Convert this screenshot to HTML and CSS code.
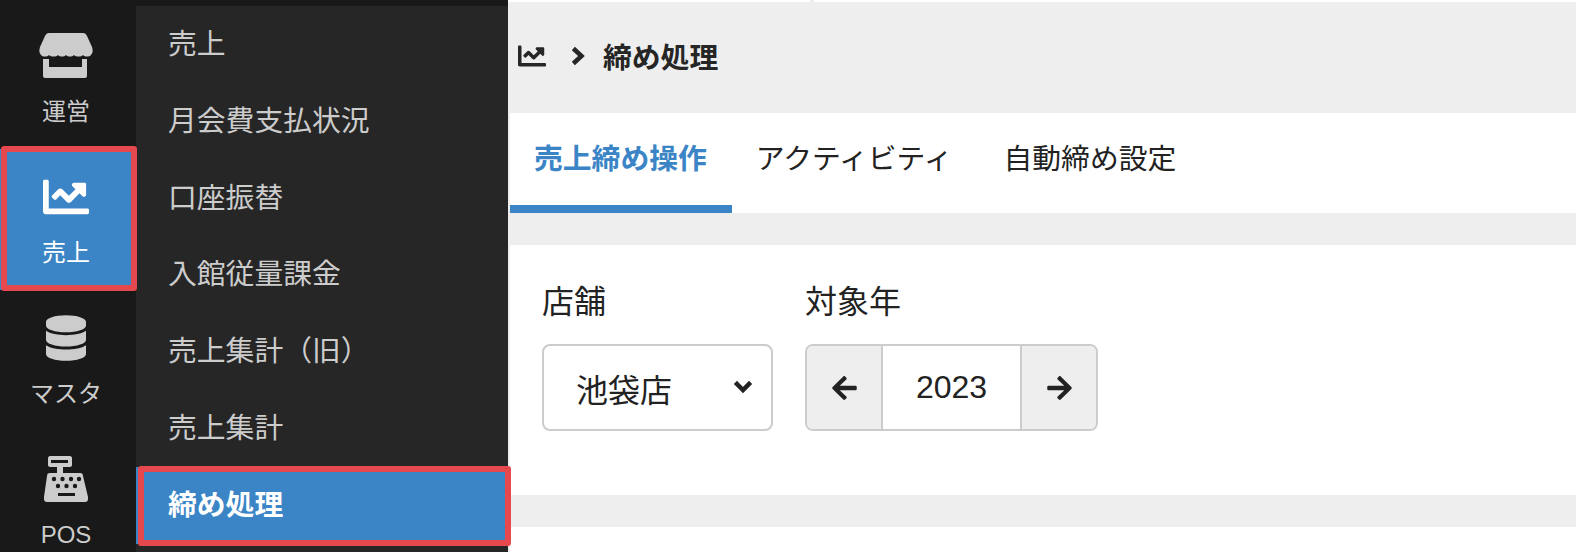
FILE: index.html
```html
<!DOCTYPE html>
<html lang="ja">
<head>
    <meta charset="UTF-8">
    <meta name="viewport" content="width=device-width, initial-scale=1.0">
    <title>締め処理</title>
    <link rel="stylesheet" href="styles.css">
</head>
<body>
    <nav class="rail">
        <a class="rail-item">
            <svg class="rail-icon" width="54" height="46" viewBox="0 0 54 46">
                <path d="M9 0h35c2 0 3 1 4 3l5 11c1 3 1 6-1 8-2 2-6 2-8 0-2 2-7 2-9 0-2 2-6 2-8 0-2 2-6 2-8 0-2 2-7 2-9 0-2 2-6 2-8 0-2-2-2-5-1-8l5-11c1-2 2-3 4-3z"/>
                <path d="M4 26h6v8h33v-8h5v17c0 1-1 2-2 2H6c-1 0-2-1-2-2z"/>
            </svg>
            <span>運営</span>
        </a>
        <a class="rail-item rail-active">
            <svg class="rail-icon" width="46" height="46" viewBox="0 0 512 512"><path d="M496 384H64V80c0-8.84-7.16-16-16-16H16C7.16 64 0 71.16 0 80v336c0 17.67 14.33 32 32 32h464c8.84 0 16-7.16 16-16v-32c0-8.84-7.16-16-16-16zM464 96H345.94c-21.38 0-32.09 25.85-16.97 40.97l32.4 32.4L288 242.75l-73.37-73.37c-12.5-12.5-32.76-12.5-45.25 0l-68.69 68.69c-6.25 6.25-6.25 16.38 0 22.63l22.62 22.62c6.25 6.25 16.38 6.25 22.63 0L192 237.25l73.37 73.37c12.5 12.5 32.76 12.5 45.25 0l96-96 32.4 32.4c15.12 15.12 40.97 4.41 40.97-16.97V112c.01-8.84-7.15-16-16-16z"/></svg>
            <span>売上</span>
            <i class="mark"></i>
        </a>
        <a class="rail-item">
            <svg class="rail-icon" width="40" height="46" viewBox="0 0 448 512"><path d="M448 73.143v45.714C448 159.143 347.667 192 224 192S0 159.143 0 118.857V73.143C0 32.857 100.333 0 224 0s224 32.857 224 73.143zM448 176v102.857C448 319.143 347.667 352 224 352S0 319.143 0 278.857V176c48.125 33.143 136.208 48.572 224 48.572S399.874 209.143 448 176zm0 160v102.857C448 479.143 347.667 512 224 512S0 479.143 0 438.857V336c48.125 33.143 136.208 48.572 224 48.572S399.874 369.143 448 336z"/></svg>
            <span>マスタ</span>
        </a>
        <a class="rail-item">
            <svg class="rail-icon" width="44" height="46" viewBox="0 0 44 46">
                <path fill-rule="evenodd" d="M6 0h20c1 0 2 1 2 2v7c0 1-1 2-2 2h-7v6h17c2 0 3 1 3 3l5 21v2c0 2-1 3-3 3H3c-2 0-3-1-3-3v-2l3-21c0-2 1-3 3-3h7v-6H6c-1 0-2-1-2-2V2c0-1 1-2 2-2zm1 4v3h17V4zm7 33v3h17v-3z"/>
                <g class="pos-keys">
                    <circle cx="10" cy="23" r="2.2"/><circle cx="18.500" cy="23" r="2.2"/><circle cx="27" cy="23" r="2.2"/><circle cx="35" cy="23" r="2.2"/>
                    <circle cx="14" cy="30" r="2.2"/><circle cx="22.500" cy="30" r="2.2"/><circle cx="31" cy="30" r="2.2"/>
                </g>
            </svg>
            <span>POS</span>
        </a>
    </nav>

    <aside class="side">
        <div class="side-list">
            <a class="side-item">売上</a>
            <a class="side-item">月会費支払状況</a>
            <a class="side-item">口座振替</a>
            <a class="side-item">入館従量課金</a>
            <a class="side-item">売上集計（旧）</a>
            <a class="side-item">売上集計</a>
            <a class="side-item side-active">締め処理<i class="mark"></i></a>
        </div>
    </aside>

    <main class="main">
        <div class="top-strip">
            <div class="strip-left"></div>
            <div class="strip-right"></div>
        </div>
        <div class="breadcrumb">
            <svg width="28" height="28" viewBox="0 0 512 512"><path d="M496 384H64V80c0-8.84-7.16-16-16-16H16C7.16 64 0 71.16 0 80v336c0 17.67 14.33 32 32 32h464c8.84 0 16-7.16 16-16v-32c0-8.84-7.16-16-16-16zM464 96H345.94c-21.38 0-32.09 25.85-16.97 40.97l32.4 32.4L288 242.75l-73.37-73.37c-12.5-12.5-32.76-12.5-45.25 0l-68.69 68.69c-6.25 6.25-6.25 16.38 0 22.63l22.62 22.62c6.25 6.25 16.38 6.25 22.63 0L192 237.25l73.37 73.37c12.5 12.5 32.76 12.5 45.25 0l96-96 32.4 32.4c15.12 15.12 40.97 4.41 40.97-16.97V112c.01-8.84-7.15-16-16-16z"/></svg>
            <svg class="crumb-sep chev" width="15" height="22" viewBox="0 0 15 22"><polyline points="4,5 10.500,11 4,17"/></svg>
            <span>締め処理</span>
        </div>

        <div class="tabs">
            <a class="tab tab-active">売上締め操作</a>
            <a class="tab">アクティビティ</a>
            <a class="tab">自動締め設定</a>
        </div>

        <section class="panel">
            <div class="field">
                <label>店舗</label>
                <div class="select">
                    <span>池袋店</span>
                    <svg class="chev" width="20" height="16" viewBox="0 0 20 16"><polyline points="4,4 10,10 16,4"/></svg>
                </div>
            </div>
            <div class="field">
                <label>対象年</label>
                <div class="stepper">
                    <button class="step">
                        <svg width="25" height="28" viewBox="0 0 448 512"><path d="M257.5 445.1l-22.2 22.2c-9.4 9.4-24.6 9.4-33.9 0L7 273c-9.4-9.4-9.4-24.6 0-33.9L201.4 44.7c9.4-9.4 24.6-9.4 33.9 0l22.2 22.2c9.5 9.5 9.3 25-.4 34.3L136.6 216H424c13.3 0 24 10.7 24 24v32c0 13.3-10.7 24-24 24H136.6l120.5 114.8c9.8 9.3 10 24.8.4 34.3z"/></svg>
                    </button>
                    <div class="year">2023</div>
                    <button class="step">
                        <svg width="25" height="28" viewBox="0 0 448 512"><path d="M190.5 66.9l22.2-22.2c9.4-9.4 24.6-9.4 33.9 0L441 239c9.4 9.4 9.4 24.6 0 33.9L246.6 467.3c-9.4 9.4-24.6 9.4-33.9 0l-22.2-22.2c-9.5-9.5-9.3-25 .4-34.3L311.4 296H24c-13.3 0-24-10.7-24-24v-32c0-13.3 10.7-24 24-24h287.4L190.9 101.2c-9.8-9.3-10-24.8-.4-34.3z"/></svg>
                    </button>
                </div>
            </div>
        </section>

        <section class="panel-next"></section>
    </main>
</body>
</html>
```

FILE: styles.css
```css
html, body {
    height: 100%;
}

body {
    margin: 0;
    display: flex;
    overflow: hidden;
    font-family: "Liberation Sans", "Noto Sans CJK JP", sans-serif;
    background-color: #eeeeee;
    color: #222;
}

svg {
    display: block;
    fill: currentColor;
}

.chev {
    fill: none;
    stroke: currentColor;
    stroke-width: 4.5;
    stroke-linecap: square;
}

.pos-keys {
    fill: #191919;
}

.rail {
    width: 136px;
    flex-shrink: 0;
    padding-top: 8px;
    background-color: #191919;
    color: #cccccc;
}

.rail-item {
    position: relative;
    height: 141px;
    display: flex;
    flex-direction: column;
    align-items: center;
    padding: 25px 4px 0 0;
    box-sizing: border-box;
    font-size: 24px;
    line-height: 32px;
}

.rail-icon {
    height: 46px;
    margin-bottom: 17px;
}

.rail-active {
    background-color: #3b85c6;
    color: white;
}

.mark {
    position: absolute;
    top: -3px;
    right: -1px;
    bottom: -1px;
    left: 1px;
    border: 6px solid #e5484d;
    border-radius: 3px;
}

.side {
    width: 372px;
    flex-shrink: 0;
    padding-top: 6px;
    background-color: #191919;
}

.side-list {
    height: 100%;
    background-color: #262626;
    color: #cccccc;
}

.side-item {
    position: relative;
    display: block;
    height: 76.8px;
    padding-left: 32px;
    font-size: 28.8px;
    line-height: 76px;
}

.side-active {
    background-color: #3b85c6;
    color: white;
    font-weight: bold;
}

.side-active .mark {
    top: -1px;
    right: -3px;
    bottom: -2px;
    left: 2px;
}

.main {
    flex: 1;
}

.top-strip {
    height: 2px;
    display: flex;
    gap: 4px;
}

.strip-left {
    width: 302px;
    background-color: white;
}

.strip-right {
    flex: 1;
    background-color: white;
}

.breadcrumb {
    height: 111px;
    display: flex;
    align-items: center;
    padding: 0 0 4px 10px;
    box-sizing: border-box;
    font-size: 28.8px;
    font-weight: bold;
    color: #262626;
}

.crumb-sep {
    margin: 0 17px 0 25px;
}

.tabs {
    height: 100px;
    margin-left: 2px;
    display: flex;
    background-color: white;
}

.tab {
    padding: 0 24px;
    font-size: 28.8px;
    line-height: 92px;
}

.tab + .tab + .tab {
    margin-left: 3px;
}

.tab-active {
    height: 92px;
    padding-right: 25px;
    border-bottom: 8px solid #3b85c6;
    color: #3b85c6;
    font-weight: bold;
}

.panel {
    height: 250px;
    margin: 32px 0 0 2px;
    display: flex;
    gap: 32px;
    padding: 32px 32px 0;
    box-sizing: border-box;
    background-color: white;
}

label {
    display: block;
    height: 67px;
    font-size: 32px;
    line-height: 50px;
}

.select {
    width: 231px;
    height: 87px;
    display: flex;
    align-items: center;
    justify-content: space-between;
    padding: 0 18px 0 32px;
    box-sizing: border-box;
    border: 2px solid #cccccc;
    border-radius: 8px;
    font-size: 32px;
}

.stepper {
    height: 87px;
    display: flex;
    box-sizing: border-box;
    border: 2px solid #cccccc;
    border-radius: 8px;
    overflow: hidden;
}

.step {
    width: 74px;
    display: flex;
    align-items: center;
    justify-content: center;
    padding: 0;
    border: none;
    background-color: #eeeeee;
    color: #222;
}

.year {
    width: 141px;
    box-sizing: border-box;
    border-left: 2px solid #cccccc;
    border-right: 2px solid #cccccc;
    text-align: center;
    font-size: 32px;
    line-height: 83px;
}

.panel-next {
    height: 40px;
    margin: 32px 0 0 2px;
    background-color: white;
}
```
